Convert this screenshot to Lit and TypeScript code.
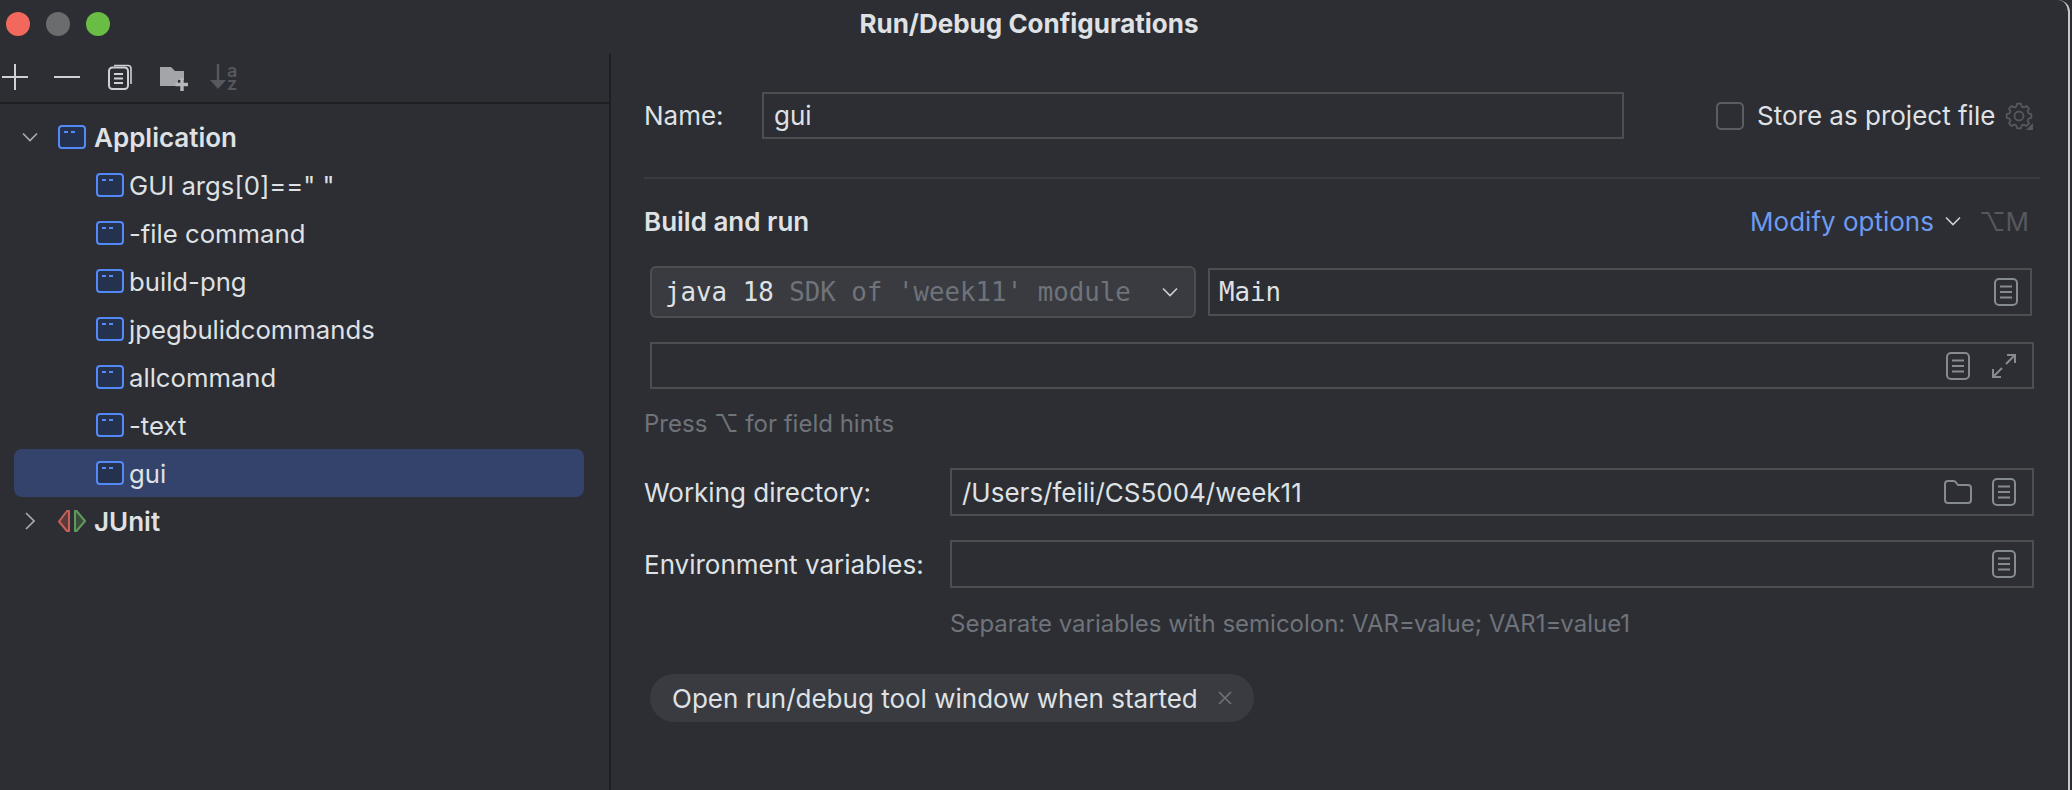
import { LitElement, html, css } from "lit";
import { customElement } from "lit/decorators.js";

const runIcon = (cls = "") => html`<svg class="run ${cls}" viewBox="0 0 28 24" preserveAspectRatio="none">
  <rect x="1" y="1" width="26" height="22" rx="3" fill="#25324d" stroke="#548af7" stroke-width="2"></rect>
  <path d="M6 7h4M13 7h4" stroke="#548af7" stroke-width="2"></path>
</svg>`;

const docIcon = () => html`<svg class="doc" viewBox="0 0 24 28">
  <rect x="1" y="1" width="22" height="26" rx="4" fill="none" stroke="#868a91" stroke-width="2"></rect>
  <path d="M6 8.5h12M6 14h12M6 19.5h12" stroke="#868a91" stroke-width="2"></path>
</svg>`;

const chevDown = (c = "#ced0d6") => html`<svg class="chev" viewBox="0 0 16 10">
  <path d="M1 1.5l7 7 7-7" fill="none" stroke="${c}" stroke-width="1.6"></path>
</svg>`;

const gearPath = (() => {
  const pts: string[] = [];
  const n = 8, cx = 14, cy = 14;
  for (let i = 0; i < n; i++) {
    const a = (i / n) * Math.PI * 2 - Math.PI / 2;
    const w = Math.PI / n;
    const p = (r: number, t: number) => `${(cx + r * Math.cos(t)).toFixed(2)} ${(cy + r * Math.sin(t)).toFixed(2)}`;
    pts.push(p(12.5, a - w * 0.38), p(12.5, a + w * 0.38), p(9.8, a + w * 0.72), p(9.8, a + w * 1.28));
  }
  return "M" + pts.join("L") + "Z";
})();

const rows = ['GUI args[0]==" "', "-file command", "build-png", "jpegbulidcommands", "allcommand", "-text", "gui"];

@customElement("app-root")
export class AppRoot extends LitElement {
  static styles = css`
    :host {
      display: block;
      width: 2072px;
      height: 790px;
      background: #2c2e33;
      font-family: Inter, "Liberation Sans", sans-serif;
      font-size: 26px;
      color: #dfe1e5;
      overflow: hidden;
    }
    .window {
      width: 2068px;
      height: 790px;
      background: #2c2e33;
      display: flex;
      flex-direction: column;
      border-right: 2px solid #c8c8c8;
      border-top-right-radius: 12px;
    }
    .titlebar {
      height: 54px;
      flex: none;
      box-sizing: border-box;
      display: grid;
      grid-template-columns: 1fr auto 1fr;
      align-items: center;
      padding-bottom: 7px;
    }
    .lights {
      display: flex;
      gap: 16px;
      padding-left: 6px;
      margin-top: 1px;
    }
    .light {
      width: 24px;
      height: 24px;
      border-radius: 50%;
    }
    .red { background: #f2685c; }
    .gray { background: #6b6c6e; }
    .green { background: #69bd45; }
    .title {
      font-weight: 700;
      font-size: 26px;
      color: #dfe1e5;
      margin-right: 10px;
    }
    .main {
      flex: 1;
      display: flex;
      min-height: 0;
    }
    .side {
      width: 609px;
      flex: none;
      box-sizing: content-box;
      border-right: 2px solid #1e1f22;
      display: flex;
      flex-direction: column;
    }
    .toolbar {
      height: 50px;
      flex: none;
      box-sizing: border-box;
      border-bottom: 2px solid #1e1f22;
      display: flex;
      align-items: center;
      padding: 0 0 2px 2px;
    }
    .toolbar svg { flex: none; display: block; }
    .t-plus { width: 26px; height: 26px; margin-right: 26px; }
    .t-minus { width: 26px; height: 26px; margin-right: 28px; }
    .t-copy { width: 24px; height: 26px; margin-right: 28px; }
    .t-folder { width: 28px; height: 24px; margin: 4px 22px 0 0; }
    .t-sort { width: 16px; height: 26px; }
    .sort-letters {
      width: 10px;
      margin-left: 1px;
      font-size: 18px;
      font-weight: 600;
      line-height: 13px;
      color: #55585e;
      text-align: center;
    }
    .tree {
      padding: 9px 0 0 14px;
      display: flex;
      flex-direction: column;
    }
    .row {
      height: 48px;
      width: 570px;
      box-sizing: border-box;
      display: flex;
      align-items: center;
      border-radius: 8px;
      white-space: nowrap;
    }
    .row.child { padding-left: 82px; font-size: 25.7px; }
    .row.sel { background: #33436b; }
    .row.group { font-weight: 600; }
    .tw {
      width: 44px;
      flex: none;
      display: flex;
      justify-content: center;
      padding-right: 12px;
      box-sizing: border-box;
    }
    .tw svg { display: block; width: 16px; height: 10px; }
    .tw svg.right { width: 10px; height: 18px; }
    .run { width: 28px; height: 24px; flex: none; display: block; }
    .row .label { margin-left: 5px; }
    .row.group .label { margin-left: 8px; }
    .junit { width: 28px; height: 24px; flex: none; display: block; }

    .form {
      flex: 1;
      padding: 38px 0 0 33px;
      display: flex;
      flex-direction: column;
      align-items: flex-start;
      white-space: nowrap;
    }
    .field {
      box-sizing: border-box;
      border: 2px solid #4c4e52;
      display: flex;
      align-items: center;
      flex: none;
    }
    .field svg { display: block; flex: none; }
    .name-row {
      display: flex;
      align-items: center;
      height: 47px;
    }
    .name-label { width: 118px; }
    .name-field {
      width: 862px;
      height: 47px;
      padding-left: 10px;
    }
    .cb {
      width: 28px;
      height: 28px;
      margin-left: 92px;
      box-sizing: border-box;
      border: 2px solid #5a5d63;
      border-radius: 5px;
      flex: none;
    }
    .cb-label { margin-left: 13px; }
    .gear { width: 28px; height: 28px; margin-left: 10px; flex: none; display: block; }
    .divider {
      width: 1396px;
      height: 2px;
      background: #393b40;
      margin-top: 38px;
    }
    .head {
      margin-top: 18px;
      width: 1385px;
      height: 48px;
      display: flex;
      align-items: center;
    }
    .head b { font-weight: 600; }
    .modify {
      margin-left: auto;
      color: #6d9bf2;
    }
    .head .chev { width: 16px; height: 10px; margin-left: 11px; display: block; }
    .keys { margin-left: 18px; color: #55585e; }
    .exec-row {
      margin: 21px 0 0 6px;
      display: flex;
      align-items: center;
      height: 52px;
    }
    .mono {
      font-family: "DejaVu Sans Mono", "Liberation Mono", monospace;
      font-size: 25.8px;
      letter-spacing: 0;
    }
    .combo {
      box-sizing: border-box;
      width: 546px;
      height: 52px;
      background: #393b40;
      border: 2px solid #4c4e52;
      border-radius: 6px;
      display: flex;
      align-items: center;
      padding-left: 13px;
    }
    .combo .sdk { color: #6f737a; margin-left: 15.5px; }
    .combo .chev { width: 16px; height: 10px; margin-left: auto; margin-right: 16px; display: block; }
    .main-field {
      margin-left: 12px;
      width: 824px;
      height: 48px;
      padding: 0 12px 0 9px;
    }
    .main-field .doc { margin-left: auto; }
    .doc { width: 24px; height: 28px; }
    .args {
      margin: 24px 0 0 6px;
      width: 1384px;
      height: 47px;
      padding-right: 16px;
    }
    .args .doc { margin-left: auto; }
    .expand { width: 24px; height: 24px; margin-left: 22px; }
    .hint { color: #6f737a; height: 32px; line-height: 32px; font-size: 24px; }
    .hint.press { margin-top: 19px; }
    .dir-row {
      display: flex;
      align-items: center;
      height: 48px;
      margin-top: 24px;
    }
    .dir-row.first { margin-top: 28px; }
    .dir-label { width: 306px; }
    .dir-field {
      width: 1084px;
      height: 48px;
      padding: 0 16px 0 10px;
    }
    .dir-field .folder { width: 28px; height: 24px; margin-left: auto; }
    .dir-field .folder + .doc { margin-left: 20px; }
    .dir-field .only { margin-left: auto; }
    .hint.sep { margin: 20px 0 0 306px; }
    .chip {
      margin: 34px 0 0 6px;
      width: 604px;
      height: 48px;
      box-sizing: border-box;
      background: #393b40;
      border-radius: 24px;
      padding-left: 22px;
      display: flex;
      align-items: center;
    }
    .chip svg { width: 14px; height: 14px; margin-left: 20px; display: block; }
  `;

  render() {
    return html`<div class="window">
      <div class="titlebar">
        <div class="lights">
          <div class="light red"></div><div class="light gray"></div><div class="light green"></div>
        </div>
        <div class="title">Run/Debug Configurations</div>
        <div></div>
      </div>
      <div class="main">
        <div class="side">
          <div class="toolbar">
            <svg class="t-plus" viewBox="0 0 26 26"><path d="M0 13h26M13 0v26" stroke="#ced0d6" stroke-width="2"></path></svg>
            <svg class="t-minus" viewBox="0 0 26 26"><path d="M0 13h26" stroke="#ced0d6" stroke-width="2"></path></svg>
            <svg class="t-copy" viewBox="0 0 24 26">
              <path d="M6 1.500h14a3 3 0 0 1 3 3V20" fill="none" stroke="#ced0d6" stroke-width="1.6"></path>
              <rect x="1" y="3.500" width="19" height="21.500" rx="3.500" fill="#2c2e33" stroke="#ced0d6" stroke-width="2"></rect>
              <path d="M6 10h9M6 14.500h9M6 19h9" stroke="#ced0d6" stroke-width="1.8"></path>
            </svg>
            <svg class="t-folder" viewBox="0 0 28 24">
              <path d="M0 0h11l4 4h9v9h-6v6H0z" fill="#a3a5a9"></path>
              <path d="M22 11v13M15.500 17.500h12.500" stroke="#b6b8bc" stroke-width="3.400"></path>
            </svg>
            <svg class="t-sort" viewBox="0 0 16 26">
              <path d="M8 0v20" stroke="#55585e" stroke-width="2.400"></path>
              <path d="M0 16h16l-8 9z" fill="#55585e"></path>
            </svg>
            <div class="sort-letters">a z</div>
          </div>
          <div class="tree">
            <div class="row group">
              <div class="tw">${chevDown("#a8abb0")}</div>
              ${runIcon()}<span class="label">Application</span>
            </div>
            ${rows.map(
              (r) => html`<div class="row child ${r === "gui" ? "sel" : ""}">${runIcon()}<span class="label">${r}</span></div>`
            )}
            <div class="row group">
              <div class="tw">
                <svg class="right" viewBox="0 0 10 18"><path d="M1 1l8 8-8 8" fill="none" stroke="#a8abb0" stroke-width="1.6"></path></svg>
              </div>
              <svg class="junit" viewBox="0 0 28 22">
                <path d="M11 1v20h-2L1 11.500 9 1z" fill="#5b3b3a" stroke="#c9605a" stroke-width="2" stroke-linejoin="round"></path>
                <path d="M17 1v20h1.500L27 11 18.500 1z" fill="#3a4a3b" stroke="#5f9a5d" stroke-width="2" stroke-linejoin="round"></path>
              </svg>
              <span class="label">JUnit</span>
            </div>
          </div>
        </div>
        <div class="form">
          <div class="name-row">
            <div class="name-label">Name:</div>
            <div class="field name-field">gui</div>
            <div class="cb"></div>
            <div class="cb-label">Store as project file</div>
            <svg class="gear" viewBox="0 0 28 28">
              <path d="${gearPath}" fill="none" stroke="#55585e" stroke-width="1.8" stroke-linejoin="round"></path>
              <circle cx="14" cy="14" r="4.500" fill="none" stroke="#55585e" stroke-width="1.8"></circle>
              <path d="M28 21v7h-7z" fill="#55585e"></path>
            </svg>
          </div>
          <div class="divider"></div>
          <div class="head">
            <b>Build and run</b>
            <span class="modify">Modify options</span>
            ${chevDown()}
            <span class="keys">⌥M</span>
          </div>
          <div class="exec-row">
            <div class="combo mono">
              <span>java 18</span><span class="sdk">SDK of 'week11' module</span>${chevDown()}
            </div>
            <div class="field main-field mono">Main${docIcon()}</div>
          </div>
          <div class="field args">
            ${docIcon()}
            <svg class="expand" viewBox="0 0 24 24">
              <path d="M14 10L23 1M15 1h8v8M10 14l-9 9M9 23H1v-8" fill="none" stroke="#868a91" stroke-width="2"></path>
            </svg>
          </div>
          <div class="hint press">Press ⌥ for field hints</div>
          <div class="dir-row first">
            <div class="dir-label">Working directory:</div>
            <div class="field dir-field">
              /Users/feili/CS5004/week11
              <svg class="folder" viewBox="0 0 28 24">
                <path d="M1 4a3 3 0 0 1 3-3h5.500a3 3 0 0 1 2.500 1.500L14 5h10a3 3 0 0 1 3 3v12a3 3 0 0 1-3 3H4a3 3 0 0 1-3-3z" fill="none" stroke="#868a91" stroke-width="2"></path>
              </svg>
              ${docIcon()}
            </div>
          </div>
          <div class="dir-row">
            <div class="dir-label">Environment variables:</div>
            <div class="field dir-field"><span class="only"></span>${docIcon()}</div>
          </div>
          <div class="hint sep">Separate variables with semicolon: VAR=value; VAR1=value1</div>
          <div class="chip">
            <span>Open run/debug tool window when started</span>
            <svg viewBox="0 0 14 14"><path d="M1 1l12 12M13 1L1 13" stroke="#6f737a" stroke-width="1.6"></path></svg>
          </div>
        </div>
      </div>
    </div>`;
  }
}
